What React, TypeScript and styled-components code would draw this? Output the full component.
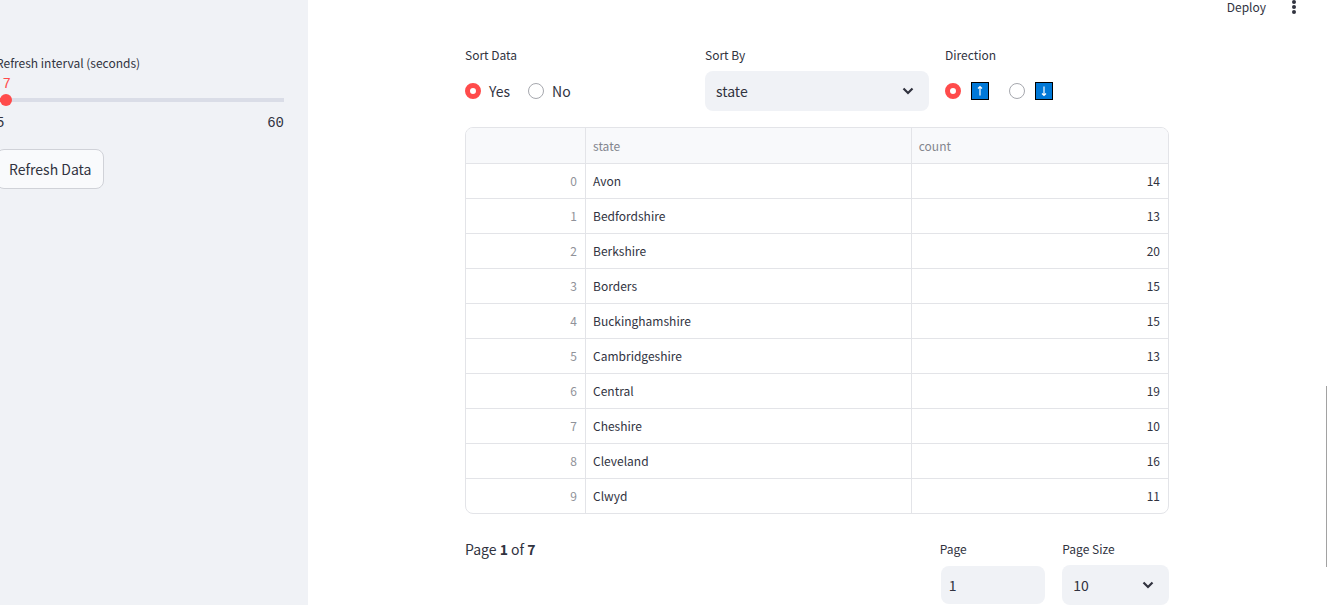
import React, { useState } from "react";
import styled, { createGlobalStyle } from "styled-components";

const ink = "#31333f";
const panel = "#f0f2f6";
const accent = "#ff4b4b";
const line = "#e3e4e8";
const sans = `"Noto Sans CJK SC", "Noto Sans", sans-serif`;

const GlobalStyle = createGlobalStyle`
  *, *::before, *::after { box-sizing: border-box; }
  body { margin: 0; background: #fff; color: ${ink}; font-family: ${sans}; font-size: 14px; line-height: 24px; }
  button, input, select { font: inherit; color: inherit; margin: 0; }
`;

const Shell = styled.div`
  display: flex;
  min-height: 100vh;
`;

const Sidebar = styled.aside`
  flex: 0 0 336px;
  margin-left: -28px;
  padding: 51px 24px 24px;
  background: ${panel};
`;

const Main = styled.main`
  flex: 1;
  min-width: 0;
  padding-right: 1px;
`;

const Label = styled.label`
  display: block;
  font-size: 12px;
  line-height: 24px;
  white-space: nowrap;
`;

const GroupLabel = styled.legend`
  padding: 0;
  font-size: 12px;
  line-height: 24px;
`;

const SliderValue = styled.output`
  display: block;
  width: 8px;
  transform: translateX(-50%);
  color: ${accent};
  font-family: "Liberation Mono", monospace;
  line-height: 18px;
`;

const Slider = styled.input`
  appearance: none;
  display: block;
  width: calc(100% + 12px);
  height: 12px;
  margin: 1px -6px 8px;
  background: none;

  &::-webkit-slider-runnable-track {
    height: 12px;
    background: linear-gradient(#dadde7, #dadde7) center / calc(100% - 12px) 4px no-repeat;
  }
  &::-webkit-slider-thumb {
    appearance: none;
    width: 12px;
    height: 12px;
    border-radius: 50%;
    background: ${accent};
    box-shadow: -5px 0 0 -4px ${accent};
  }
`;

const SliderEnds = styled.div`
  display: flex;
  justify-content: space-between;
  font-family: "Liberation Mono", monospace;
  line-height: 18px;
`;

const RefreshButton = styled.button`
  height: 40px;
  margin-top: 17px;
  padding: 0 12px;
  border: 1px solid #d0d2d8;
  border-radius: 8px;
  background: #f9fafc;
`;

const Toolbar = styled.header`
  display: flex;
  align-items: center;
  justify-content: flex-end;
  gap: 20px;
  height: 14px;
  padding-right: 24px;
`;

const ToolButton = styled.button`
  display: flex;
  align-items: center;
  padding: 0;
  border: 0;
  background: none;
  font-size: 12px;
  line-height: 16px;
`;

const Content = styled.div`
  max-width: 704px;
  margin: 0 auto;
  padding-top: 29px;
`;

const Filters = styled.div`
  display: grid;
  grid-template-columns: repeat(3, 1fr);
  gap: 16px;
  margin-bottom: 16px;
`;

const RadioGroup = styled.fieldset`
  min-width: 0;
  margin: 0;
  padding: 0;
  border: 0;
`;

const RadioRow = styled.div`
  display: flex;
  align-items: center;
  gap: 18px;
  height: 40px;
  margin-top: 4px;
`;

const RadioLabel = styled.label`
  display: flex;
  align-items: center;
  gap: 8px;
`;

const Radio = styled.input`
  appearance: none;
  width: 16px;
  height: 16px;
  border: 1px solid #a6a8ae;
  border-radius: 50%;
  background: #fff;

  &:checked {
    border: 5px solid ${accent};
  }
`;

const ArrowTile = styled.svg`
  display: block;
  margin: 0 2px;
`;

const SelectBox = styled.div`
  position: relative;
  height: 40px;
  margin-top: 4px;
`;

const Select = styled.select`
  appearance: none;
  width: 100%;
  height: 40px;
  padding: 0 32px 0 11px;
  border: 0;
  border-radius: 8px;
  background: ${panel};
`;

const Chevron = styled.svg`
  position: absolute;
  right: 15px;
  top: 16px;
  pointer-events: none;
`;

const TableFrame = styled.div`
  overflow: hidden;
  border: 1px solid ${line};
  border-radius: 8px;
`;

const Table = styled.table`
  width: 100%;
  table-layout: fixed;
  border-collapse: separate;
  border-spacing: 0;
  font-size: 12px;
  line-height: 16px;
`;

const HeadCell = styled.th<{ $width: string }>`
  width: ${(p) => p.$width};
  height: 36px;
  padding: 0 7px;
  border-bottom: 1px solid ${line};
  border-right: 1px solid ${line};
  background: #f8f9fb;
  color: #84868e;
  font-weight: 400;
  text-align: left;

  &:last-child { border-right: 0; }
`;

const Cell = styled.td<{ $numeric?: boolean; $muted?: boolean }>`
  height: 35px;
  padding: 0 8px 0 7px;
  border-bottom: 1px solid ${line};
  border-right: 1px solid ${line};
  color: ${(p) => (p.$muted ? "#909299" : ink)};
  text-align: ${(p) => (p.$numeric ? "right" : "left")};

  &:last-child { border-right: 0; }
  tr:last-child > & { height: 34px; border-bottom: 0; }
`;

const Pager = styled.div`
  display: grid;
  grid-template-columns: 43fr 10fr 10fr;
  gap: 16px;
  margin-top: 23px;
`;

const PageStatus = styled.p`
  margin: 0;
`;

const PageInput = styled.input`
  display: block;
  width: calc(100% - 2px);
  height: 38px;
  margin: 5px 1px 0;
  padding: 0 8px;
  border: 0;
  border-radius: 8px;
  background: ${panel};
`;

const ScrollThumb = styled.div`
  position: fixed;
  right: 0;
  bottom: 38px;
  width: 1px;
  height: 30%;
  background: #a2a2a2;
`;

const counties: [string, number][] = [
  ["Avon", 14],
  ["Bedfordshire", 13],
  ["Berkshire", 20],
  ["Borders", 15],
  ["Buckinghamshire", 15],
  ["Cambridgeshire", 13],
  ["Central", 19],
  ["Cheshire", 10],
  ["Cleveland", 16],
  ["Clwyd", 11],
];

function DownChevron() {
  return (
    <Chevron width="12" height="8" viewBox="0 0 12 8" aria-hidden="true">
      <path d="M1.5 1.5 6 6l4.5-4.5" fill="none" stroke={ink} strokeWidth="2.2" />
    </Chevron>
  );
}

function Arrow({ down }: { down?: boolean }) {
  return (
    <ArrowTile width="18" height="18" viewBox="0 0 18 18" role="img" aria-label={down ? "Descending" : "Ascending"}>
      <rect x="0.5" y="0.5" width="17" height="17" fill="#0078d7" stroke="#000" />
      <path
        d={down ? "M9 4.500v9M7 11.500l2 2 2-2" : "M9 13.500v-9M7 6.500l2-2 2 2"}
        fill="none"
        stroke="#fff"
        strokeWidth="1.2"
      />
    </ArrowTile>
  );
}

export default function App() {
  const [seconds, setSeconds] = useState(7);
  return (
    <>
      <GlobalStyle />
      <Shell>
        <Sidebar>
          <Label htmlFor="interval">Refresh interval (seconds)</Label>
          <SliderValue htmlFor="interval" style={{ marginLeft: `${((seconds - 5) / 55) * 100}%` }}>
            {seconds}
          </SliderValue>
          <Slider
            id="interval"
            type="range"
            min={5}
            max={60}
            value={seconds}
            onChange={(e) => setSeconds(Number(e.target.value))}
          />
          <SliderEnds>
            <span>5</span>
            <span>60</span>
          </SliderEnds>
          <RefreshButton type="button">Refresh Data</RefreshButton>
        </Sidebar>
        <Main>
          <Toolbar>
            <ToolButton type="button">Deploy</ToolButton>
            <ToolButton type="button" aria-label="Menu">
              <svg width="16" height="14" viewBox="0 0 16 14" fill={ink}>
                <circle cx="8" cy="2" r="2" />
                <circle cx="8" cy="7" r="2" />
                <circle cx="8" cy="12" r="2" />
              </svg>
            </ToolButton>
          </Toolbar>
          <Content>
            <Filters>
              <RadioGroup>
                <GroupLabel>Sort Data</GroupLabel>
                <RadioRow>
                  <RadioLabel>
                    <Radio type="radio" name="sort" defaultChecked />
                    Yes
                  </RadioLabel>
                  <RadioLabel>
                    <Radio type="radio" name="sort" />
                    No
                  </RadioLabel>
                </RadioRow>
              </RadioGroup>
              <div>
                <Label htmlFor="sort-by">Sort By</Label>
                <SelectBox>
                  <Select id="sort-by" defaultValue="state">
                    <option>state</option>
                    <option>count</option>
                  </Select>
                  <DownChevron />
                </SelectBox>
              </div>
              <RadioGroup>
                <GroupLabel>Direction</GroupLabel>
                <RadioRow>
                  <RadioLabel>
                    <Radio type="radio" name="direction" defaultChecked />
                    <Arrow />
                  </RadioLabel>
                  <RadioLabel>
                    <Radio type="radio" name="direction" />
                    <Arrow down />
                  </RadioLabel>
                </RadioRow>
              </RadioGroup>
            </Filters>
            <TableFrame>
              <Table>
                <thead>
                  <tr>
                    <HeadCell $width="17.1%" />
                    <HeadCell $width="46.4%">state</HeadCell>
                    <HeadCell $width="36.5%">count</HeadCell>
                  </tr>
                </thead>
                <tbody>
                  {counties.map(([state, count], i) => (
                    <tr key={state}>
                      <Cell $numeric $muted>{i}</Cell>
                      <Cell>{state}</Cell>
                      <Cell $numeric>{count}</Cell>
                    </tr>
                  ))}
                </tbody>
              </Table>
            </TableFrame>
            <Pager>
              <PageStatus>
                Page <b>1</b> of <b>7</b>
              </PageStatus>
              <div>
                <Label htmlFor="page">Page</Label>
                <PageInput id="page" type="text" inputMode="numeric" defaultValue="1" />
              </div>
              <div>
                <Label htmlFor="page-size">Page Size</Label>
                <SelectBox>
                  <Select id="page-size" defaultValue="10">
                    <option>10</option>
                    <option>25</option>
                    <option>50</option>
                  </Select>
                  <DownChevron />
                </SelectBox>
              </div>
            </Pager>
          </Content>
        </Main>
      </Shell>
      <ScrollThumb />
    </>
  );
}
